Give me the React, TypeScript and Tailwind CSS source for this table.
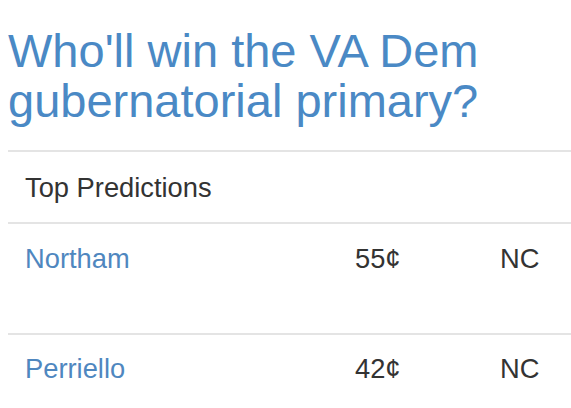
type Prediction = {
  name: string;
  price: string;
  change: string;
};

const predictions: Prediction[] = [
  { name: 'Northam', price: '55¢', change: 'NC' },
  { name: 'Perriello', price: '42¢', change: 'NC' },
];

export default function App() {
  return (
    <div className="min-h-[408px] w-[571px] overflow-hidden bg-white pl-2 font-[family-name:'Liberation_Sans',Arial,sans-serif]">
      <h1 className="mt-[26px] text-[47px] leading-[50px] text-[#4a89c5]">
        Who'll win the VA Dem gubernatorial primary?
      </h1>
      <div className="mt-[24px] text-[27.3px] leading-[38px] text-[#333]">
        <div className="border-t-2 border-[#e4e4e4] pb-[15px] pl-[17px] pt-[17px]">
          Top Predictions
        </div>
        {predictions.map((p, i) => (
          <div
            key={p.name}
            className={
              i === 0
                ? 'grid grid-cols-[330px_145px_1fr] border-t-2 border-[#e4e4e4] pb-[55px] pt-[16px]'
                : 'grid grid-cols-[330px_145px_1fr] border-t-2 border-[#e4e4e4] pt-[15px]'
            }
          >
            <a href="#" className="pl-[17px] text-[#4f87bf]">
              {p.name}
            </a>
            <span className="pl-[17px]">{p.price}</span>
            <span className="pl-[17px]">{p.change}</span>
          </div>
        ))}
      </div>
    </div>
  );
}
